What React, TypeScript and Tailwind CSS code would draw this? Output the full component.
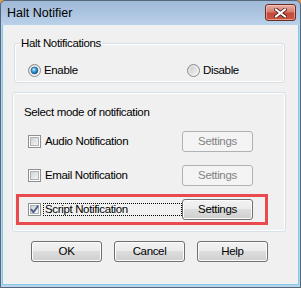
import React from "react";

function Radio({ checked, id }: { checked?: boolean; id: string }) {
  return (
    <svg width="13" height="13" viewBox="0 0 13 13" className="shrink-0">
      <defs>
        <linearGradient id={`rg${id}`} x1="0" y1="0" x2="1" y2="1">
          <stop offset="0" stopColor="#c4c4c4" />
          <stop offset="1" stopColor="#fbfbfb" />
        </linearGradient>
        <radialGradient id={`rd${id}`} cx="0.4" cy="0.35" r="0.75">
          <stop offset="0" stopColor="#d2f0ff" />
          <stop offset="0.45" stopColor="#2f9be0" />
          <stop offset="1" stopColor="#0d4d86" />
        </radialGradient>
      </defs>
      <circle cx="6.5" cy="6.5" r="6" fill={`url(#rg${id})`} stroke="#8c8c8c" />
      <circle cx="6.5" cy="6.5" r="4.5" fill="none" stroke="#f4f4f4" strokeWidth="0.8" />
      {checked && <circle cx="6.5" cy="6.5" r="3.4" fill={`url(#rd${id})`} stroke="#1d4f7c" strokeWidth="0.6" />}
    </svg>
  );
}

function Check({ checked, id }: { checked?: boolean; id: string }) {
  return (
    <svg width="13" height="13" viewBox="0 0 13 13" className="shrink-0">
      <defs>
        <linearGradient id={`cg${id}`} x1="0" y1="0" x2="1" y2="1">
          <stop offset="0" stopColor="#cdd0d4" />
          <stop offset="1" stopColor="#f7f7f7" />
        </linearGradient>
      </defs>
      <rect x="0.5" y="0.5" width="12" height="12" fill="#fdfdfd" stroke="#8e8f8f" />
      <rect x="2.5" y="2.5" width="8" height="8" fill={`url(#cg${id})`} stroke="#aeb2b7" />
      {checked && (
        <path d="M3 6.2 L5.4 9.2 L10.2 2.8" fill="none" stroke="#4b5d8c" strokeWidth="1.9" strokeLinejoin="round" />
      )}
    </svg>
  );
}

function Btn({ children, disabled }: { children: React.ReactNode; disabled?: boolean }) {
  return disabled ? (
    <div className="w-[71px] h-[21px] shrink-0 rounded-[3px] border border-[#adb2b5] bg-[#f4f4f4] flex items-center justify-center text-[#838383]">
      {children}
    </div>
  ) : (
    <div className="w-[71px] h-[21px] shrink-0 rounded-[3px] border border-[#707070] bg-[linear-gradient(#f2f2f2_0%,#ebebeb_50%,#dddddd_50%,#cfcfcf_100%)] shadow-[inset_0_0_0_1px_#fbfbfb] flex items-center justify-center text-black">
      {children}
    </div>
  );
}

function Row({
  label,
  checked,
  focus,
  disabled,
  highlight,
  id,
}: {
  label: string;
  checked?: boolean;
  focus?: boolean;
  disabled?: boolean;
  highlight?: boolean;
  id: string;
}) {
  return (
    <div
      className={`h-[31px] w-[252px] ml-[3px] border-[3px] ${
        highlight ? "border-[#e84a4d]" : "border-transparent"
      } flex items-center pl-[9px] pr-[12px]`}
    >
      <Check checked={checked} id={id} />
      <span
        className={`ml-[2px] px-[1px] h-[13px] leading-[11px] border border-dotted ${
          focus ? "border-black" : "border-transparent"
        } flex-1 mr-auto`}
      >
        <span className="inline-block">{label}</span>
      </span>
      <Btn disabled={disabled}>Settings</Btn>
    </div>
  );
}

export default function App() {
  return (
    <div className="w-[301px] h-[288px] bg-[#e39b4c] font-['Liberation_Sans',Arial,sans-serif] text-[11.5px] tracking-[-0.35px] text-black">
      <div className="w-[301px] h-[288px] rounded-t-[5px] border border-[#54677d] bg-[linear-gradient(#a1bad7_0px,#aac2de_10px,#bad1ea_24px,#bcd3ec_100%)] flex flex-col">
        {/* Title bar */}
        <div className="h-[24px] shrink-0 flex items-start pl-[6px] pr-[4px]">
          <span className="text-[12.5px] tracking-[0px] leading-[15px] mt-[5px] text-black">Halt Notifier</span>
          <div className="ml-auto mt-[3px] w-[31px] h-[17px] rounded-[3px] border border-[#6b2a24] bg-[linear-gradient(#eab0a5_0%,#d77b6c_45%,#c4493a_55%,#c9583f_100%)] shadow-[inset_0_0_0_1px_rgba(255,220,210,0.5)] flex items-center justify-center">
            <svg width="13" height="10" viewBox="0 0 13 10">
              <path d="M2 1.5 L11 8.5 M11 1.5 L2 8.5" stroke="#4a1612" strokeWidth="3.6" strokeLinecap="square" />
              <path d="M2 1.5 L11 8.5 M11 1.5 L2 8.5" stroke="#ffffff" strokeWidth="2.1" strokeLinecap="square" />
            </svg>
          </div>
        </div>
        {/* Client */}
        <div className="flex-1 ml-[1px] mr-[1px] mb-[2px] border-x border-b border-[#7fcbe9] bg-[#f0f0f0] flex flex-col">
          {/* Group 1 */}
          <fieldset className="ml-[11px] mt-[11px] w-[271px] border border-[#d5dfe5] rounded-[3px] shadow-[inset_0_0_0_1px_#ffffff] px-[5px] pb-[4px]">
            <legend className="px-[1px] leading-[14px]">Halt Notifications</legend>
            <div className="mt-[13px] h-[15px] flex items-center pl-[8px]">
              <div className="w-[159px] flex items-center">
                <Radio checked id="a" />
                <span className="ml-[3px] leading-[15px]">Enable</span>
              </div>
              <div className="flex items-center">
                <Radio id="b" />
                <span className="ml-[3px] leading-[15px]">Disable</span>
              </div>
            </div>
          </fieldset>
          {/* Group 2 */}
          <div className="ml-[9px] mt-[9px] w-[274px] border border-[#d5dfe5] rounded-[3px] shadow-[inset_0_0_0_1px_#ffffff] pt-[12px] pb-[6px] flex flex-col">
            <div className="pl-[11px] leading-[15px]">Select mode of notification</div>
            <div className="mt-[6px] flex flex-col gap-[3px]">
              <Row label="Audio Notification" disabled id="c1" />
              <Row label="Email Notification" disabled id="c2" />
              <Row label="Script Notification" checked focus highlight id="c3" />
            </div>
          </div>
          {/* Buttons */}
          <div className="mt-[9px] ml-[28px] flex gap-[12px]">
            <Btn>OK</Btn>
            <Btn>Cancel</Btn>
            <Btn>Help</Btn>
          </div>
        </div>
      </div>
    </div>
  );
}
